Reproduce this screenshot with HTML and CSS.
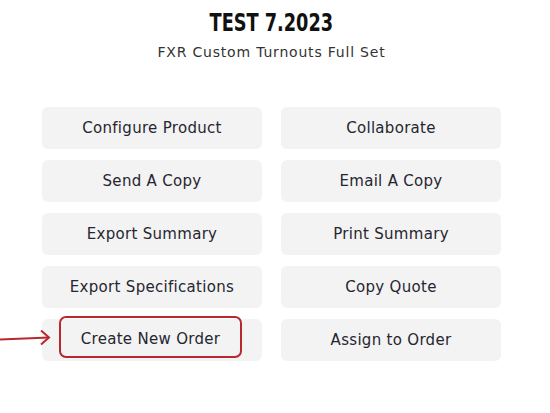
FILE: index.html
```html
<!DOCTYPE html>
<html>
<head>
<meta charset="utf-8">
<link rel="stylesheet" href="styles.css">
</head>
<body>
<div class="page">
  <header class="head">
    <h1 class="title"><span class="title-text">TEST 7.2023</span></h1>
    <p class="subtitle">FXR Custom Turnouts Full Set</p>
  </header>
  <div class="grid">
    <div class="btn">Configure Product</div>
    <div class="btn">Collaborate</div>
    <div class="btn">Send A Copy</div>
    <div class="btn">Email A Copy</div>
    <div class="btn">Export Summary</div>
    <div class="btn">Print Summary</div>
    <div class="btn">Export Specifications</div>
    <div class="btn">Copy Quote</div>
    <div class="btn highlight-cell"><span class="highlight">Create New Order</span>
      <svg class="arrow" width="52" height="20" viewBox="0 0 52 20"><path d="M0 9.5 L49 7.5" stroke="#b8282e" stroke-width="2" fill="none"/><path d="M41 0.5 L49 7.5 L41 14.5" stroke="#b8282e" stroke-width="2" fill="none"/></svg>
    </div>
    <div class="btn">Assign to Order</div>
  </div>
</div>
</body>
</html>
```
FILE: styles.css
```css
html, body { margin: 0; padding: 0; background: #fff; }
.page { width: 459px; margin-left: 42px; padding-top: 8px; }
.head { text-align: center; }
.title {
  margin: 0;
  font-family: "DejaVu Sans Condensed", "DejaVu Sans", sans-serif;
  font-stretch: condensed;
  font-weight: 700;
  font-size: 24px;
  line-height: 30px;
  color: #111;
}
.title-text { display: inline-block; transform: scaleX(0.82); }
.subtitle {
  margin: 6px 0 0;
  font-family: "DejaVu Sans", sans-serif;
  font-size: 14px;
  letter-spacing: 0.8px;
  line-height: 16px;
  color: #333;
}
.grid {
  margin-top: 47px;
  display: grid;
  grid-template-columns: 220px 220px;
  column-gap: 19px;
  row-gap: 11px;
}
.btn {
  height: 42px;
  background: #f3f3f3;
  border-radius: 6px;
  display: flex;
  align-items: center;
  justify-content: center;
  font-family: "DejaVu Sans", sans-serif;
  font-size: 15px;
  letter-spacing: 0.3px;
  color: #262630;
}
.highlight-cell { position: relative; }
.highlight {
  position: absolute;
  left: 17px;
  top: -3px;
  width: 179px;
  height: 35px;
  padding-top: 3px;
  border: 2px solid #b8282e;
  border-radius: 7px;
  display: flex;
  align-items: center;
  justify-content: center;
}
.arrow { position: absolute; left: -42px; top: 11px; }
```
